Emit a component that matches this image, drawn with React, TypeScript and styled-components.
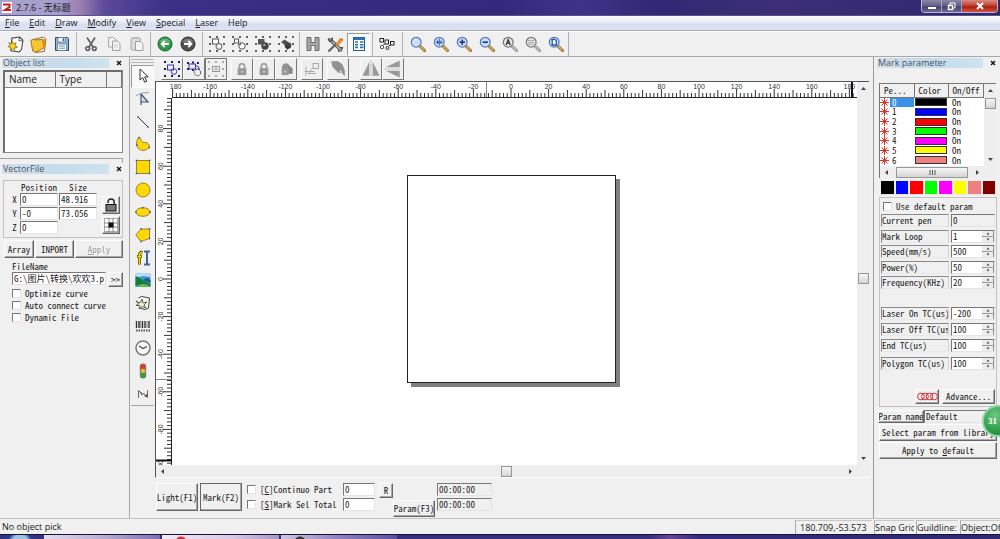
import React from "react";
import styled, { createGlobalStyle, css } from "styled-components";

const ui = `"Open Sans", "Noto Sans CJK SC", sans-serif`;
const mono = `"Noto Sans Mono CJK SC", "Liberation Mono", "Noto Sans CJK SC", monospace`;

const GlobalStyle = createGlobalStyle`
  * { box-sizing: border-box; }
  html, body, #root { height: 100%; }
  body { margin: 0; background: #f0f0f0; color: #1a1a1a; font: 9px/12px ${ui}; overflow: hidden; }
  button, input { font: inherit; color: inherit; margin: 0; padding: 0; }
  svg { display: block; flex: none; }
`;

const Window = styled.div`
  display: flex;
  flex-direction: column;
  height: 100%;
  overflow: hidden;
`;

/* ---------- title bar and menu ---------- */

const TitleBar = styled.header`
  flex: none;
  display: flex;
  align-items: center;
  height: 16px;
  padding-left: 2px;
  gap: 4px;
  border-bottom: 1px solid #56528a;
  background: linear-gradient(90deg, #a9a3cd 0, #a49dcb 60px, #9a7fb0 80px, #5b4a9a 105px, #3a2f84 170px, #33297a 50%, #3f3288 58%, #302873 66%, #3c2f78 78%, #2f2570 100%);
`;
const TitleText = styled.h1`
  margin: 0;
  font-size: 9px;
  font-weight: 400;
  line-height: 14px;
  flex: 1;
`;
const WindowButtons = styled.div`
  display: flex;
  align-self: flex-start;
  height: 13px;
  margin-right: 2px;
  border: 1px solid #b9b7d3;
  border-top: 0;
  border-radius: 0 0 4px 4px;
  overflow: hidden;
`;
const WindowButton = styled.button<{ $close?: boolean }>`
  display: flex;
  align-items: center;
  justify-content: center;
  width: ${(p) => (p.$close ? 35 : 20)}px;
  border: 0;
  border-right: ${(p) => (p.$close ? "0" : "1px solid #a5a2c4")};
  background: ${(p) => (p.$close ? "linear-gradient(#d98b80, #c0392b 50%, #a81f12 55%, #d2543c)" : "linear-gradient(#8a87a8, #605c85 50%, #464070 55%, #6b678f)")};
`;

const MenuBar = styled.nav`
  flex: none;
  display: flex;
  height: 15px;
  padding-left: 5px;
  gap: 10px;
  background: linear-gradient(#fbfcfe, #eef1f9 30%, #d9dff1 60%, #dde3f4);
  border-bottom: 1px solid #a9abb5;
`;
const MenuItem = styled.a`
  color: #1a1a1a;
  text-decoration: none;
  line-height: 14px;
  font-size: 9px;
`;

/* ---------- toolbars ---------- */

const Toolbar = styled.div`
  flex: none;
  display: flex;
  align-items: center;
  height: 26px;
  padding-left: 4px;
  border-bottom: 1px solid #a9a9ad;
  border-top: 1px solid #fff;
`;
const Separator = styled.span<{ $w: number }>`
  width: ${(p) => p.$w}px;
  height: 24px;
  display: flex;
  justify-content: center;
  &::before { content: ""; width: 1px; background: #b4b4b4; }
`;
const ToolButton = styled.button<{ $on?: boolean }>`
  display: flex;
  align-items: center;
  justify-content: center;
  width: 23px;
  height: 23px;
  border: 1px solid transparent;
  background: transparent;
  ${(p) => p.$on && css`background: #fafafa; border-color: #9a9a9a #fff #fff #9a9a9a;`}
`;

const Main = styled.div`
  flex: 1;
  min-height: 0;
  display: flex;
`;

/* ---------- docks ---------- */

const Dock = styled.aside<{ $w: number; $right?: boolean }>`
  flex: none;
  position: relative;
  width: ${(p) => p.$w}px;
  ${(p) => (p.$right ? "border-left: 1px solid #9d9d9d; padding: 1px 3px 0 3px;" : "border-right: 1px solid #a5a5a5; padding: 1px 6px 0 2px;")}
`;
const PanelTitle = styled.div`
  display: flex;
  align-items: center;
  gap: 6px;
`;
const PanelName = styled.h2`
  flex: 1;
  margin: 0;
  height: 10px;
  padding-left: 1px;
  font-size: 9px;
  line-height: 10px;
  font-weight: 400;
  color: #44586c;
  background: linear-gradient(90deg, #d5dfe9, #c5dbe9 50%, #cfe3ef);
`;
const CloseButton = styled.button`
  width: 8px;
  height: 8px;
  border: 0;
  background: none;
  display: flex;
  align-items: center;
  justify-content: center;
`;
const ObjectList = styled.div`
  height: 83px;
  margin: 2px 0 0 1px;
  border: 1px solid #8a8a8a;
  border-top: 2px solid #6e6e6e;
  border-left: 2px solid #6e6e6e;
  background: #fff;
`;
const ObjectTable = styled.table`
  width: 100%;
  table-layout: fixed;
  border-collapse: collapse;
  th {
    height: 15px;
    padding: 0 0 0 4px;
    text-align: left;
    font-weight: 400;
    font-size: 10px;
    line-height: 14px;
    background: #f0f0f0;
    border-right: 1px solid #777;
    border-bottom: 1px solid #888;
  }
`;
const DockDivider = styled.div`
  height: 5px;
  margin: 5px 0 1px -2px;
  border-top: 1px solid #a0a0a0;
  border-right: 1px solid #a0a0a0;
`;

/* ---------- form parts ---------- */

const Form = styled.form`
  font-family: ${mono};
  font-size: 9px;
  line-height: 11px;
`;
const GroupBox = styled.fieldset`
  margin: 0;
  padding: 0;
  min-width: 0;
  border: 1px solid #c2c2c2;
`;
const sunken = css`
  border: 1px solid;
  border-color: #777 #e4e4e4 #e4e4e4 #777;
`;
const TextField = styled.input<{ $h?: number; $plain?: boolean }>`
  ${sunken}
  width: 100%;
  min-width: 0;
  height: ${(p) => p.$h ?? 13}px;
  padding-left: 1px;
  background: ${(p) => (p.$plain ? "#f0f0f0" : "#fff")};
  font-family: ${mono};
  font-size: 9px;
  line-height: 11px;
  border-radius: 0;
  outline: 0;
`;
const PushButton = styled.button<{ $w?: number; $h: number; $strong?: boolean }>`
  ${(p) => (p.$w ? `width: ${p.$w}px;` : "width: 100%;")}
  height: ${(p) => p.$h}px;
  display: flex;
  align-items: center;
  justify-content: center;
  flex: none;
  white-space: nowrap;
  overflow: hidden;
  border: 1px solid;
  border-color: ${(p) => (p.$strong ? "#666" : "#fff #666 #666 #fff")};
  box-shadow: inset -1px -1px 0 #a8a8a8;
  background: #f0f0f0;
  font-family: ${mono};
  font-size: 9px;
  line-height: 11px;
  &:disabled { color: #9c9c9c; text-shadow: 1px 1px 0 #fff; }
`;
const CheckLine = styled.label`
  display: flex;
  align-items: center;
  gap: 4px;
  height: 11px;
  white-space: nowrap;
`;
const CheckBox = styled.input.attrs({ type: "checkbox" })`
  appearance: none;
  ${sunken}
  flex: none;
  width: 9px;
  height: 9px;
  background: #fff;
  border-radius: 0;
`;

/* vector file */
const PositionGroup = styled(GroupBox)`
  margin: 6px 0 0 1px;
  padding: 1px 2px 3px 6px;
  display: flex;
  justify-content: space-between;
`;
const AxisGrid = styled.div`
  display: grid;
  grid-template-columns: 9px 38px 38px;
  grid-template-rows: 10px;
  column-gap: 1px;
  row-gap: 1px;
  align-items: center;
  grid-auto-rows: 13px;
  > span { text-align: center; }
`;
const SideButtons = styled.div`
  display: flex;
  flex-direction: column;
  gap: 2px;
  padding-top: 14px;
`;
const ButtonRow = styled.div`
  display: flex;
  gap: 1px;
  margin: 2px 0 0 2px;
`;
const FileBlock = styled.div`
  display: flex;
  flex-direction: column;
  padding-left: 10px;
  margin-top: 3px;
`;
const FileRow = styled.div`
  display: flex;
  gap: 2px;
  margin-bottom: 1px;
`;
const Checks = styled.div`
  display: flex;
  flex-direction: column;
  gap: 1px;
`;

/* drawing tools */
const ToolColumn = styled.div`
  flex: none;
  width: 25px;
  padding: 2px 1px 0;
`;
const Grip = styled.div`
  height: 4px;
  margin-bottom: 2px;
  border: 1px solid #b5b5b5;
  border-left: 0;
  border-right: 0;
`;
const ToolList = styled.div`
  display: grid;
  grid-auto-rows: 1fr;
  height: 341px;
  border-bottom: 1px solid #a5a5a5;
`;
const DrawTool = styled.button<{ $on?: boolean }>`
  display: flex;
  align-items: center;
  justify-content: center;
  border: 1px solid transparent;
  background: transparent;
  ${(p) => p.$on && css`background: #f8f8f8; border-color: #9a9a9a #fff #fff #9a9a9a;`}
`;

/* ---------- centre ---------- */

const Center = styled.main`
  flex: 1;
  min-width: 0;
  display: flex;
  flex-direction: column;
`;
const EditBar = styled.div`
  flex: none;
  display: flex;
  align-items: center;
  gap: 4px;
  height: 24px;
  padding-left: 6px;
`;
const EditGroup = styled.div`
  display: flex;
  &:last-child { margin-left: 7px; }
`;
const EditButton = styled.button<{ $on?: boolean }>`
  width: 22px;
  height: 22px;
  display: flex;
  align-items: center;
  justify-content: center;
  background: #efefef;
  border: 1px solid;
  border-color: ${(p) => (p.$on ? "#777" : "#fbfbfb #777 #777 #fbfbfb")};
`;
const Workspace = styled.div`
  flex: 1;
  min-height: 0;
  display: grid;
  grid-template-columns: 17px minmax(0, 1fr) 12px;
  grid-template-rows: 16px minmax(0, 1fr) 12px;
  margin-right: 4px;
  border-top: 1px solid #555;
  border-left: 1px solid #555;
  border-bottom: 1px solid #fff;
  background: #fff;
`;
const TopRuler = styled.svg`
  grid-column: 1 / 3;
  width: 100%;
  height: 16px;
  overflow: hidden;
`;
const SideRuler = styled.svg`
  width: 17px;
  height: 100%;
  overflow: hidden;
`;
const Canvas = styled.div`
  position: relative;
  overflow: hidden;
  background: #fff;
`;
const Sheet = styled.div`
  position: absolute;
  left: 234px;
  top: 77px;
  width: 209px;
  height: 208px;
  background: #fff;
  border: 1px solid #222;
  box-shadow: 4px 4px 0 #808080;
`;
const ScrollTrack = styled.div<{ $vertical?: boolean; $end?: number }>`
  display: flex;
  flex-direction: ${(p) => (p.$vertical ? "column" : "row")};
  align-items: center;
  justify-content: space-between;
  padding: ${(p) => (p.$vertical ? "3px 0" : `0 ${p.$end ?? 3}px 0 3px`)};
  background: #eeeeee;
`;
const BottomTrack = styled(ScrollTrack)`
  grid-column: 1 / -1;
`;
const ScrollThumb = styled.div<{ $w?: number; $h?: number }>`
  width: ${(p) => p.$w ?? 11}px;
  height: ${(p) => p.$h ?? 11}px;
  display: flex;
  align-items: center;
  justify-content: center;
  border: 1px solid #979797;
  background: linear-gradient(#f6f6f6, #d4d4d4);
`;
const ScrollHead = styled.div`
  display: flex;
  flex-direction: column;
  align-items: center;
  gap: 4px;
`;

const MarkBar = styled.form`
  flex: none;
  display: flex;
  height: 40px;
  padding: 5px 0 0 1px;
  font-family: ${mono};
  font-size: 9px;
  line-height: 11px;
  align-items: flex-start;
`;
const MarkButtons = styled.div`
  display: flex;
  gap: 2px;
  margin-right: 5px;
`;
const Stack = styled.div<{ $w?: number }>`
  display: flex;
  flex-direction: column;
  gap: 2px;
  ${(p) => p.$w && `width: ${p.$w}px;`}
  > label { height: 13px; white-space: nowrap; display: flex; align-items: center; }
`;
const ResetSlot = styled.div`
  margin-left: 4px;
`;
const ParamSlot = styled.div`
  align-self: flex-end;
  margin-bottom: 1px;
  margin-right: 2px;
`;

/* ---------- mark parameters ---------- */

const PenBox = styled.div`
  display: grid;
  grid-template-columns: minmax(0, 1fr) 12px;
  grid-template-rows: 82px 12px;
  margin: 15px 1px 0 2px;
  border-top: 1px solid #777;
  border-left: 1px solid #777;
  background: #fff;
  overflow: hidden;
`;
const PenTable = styled.table`
  width: 100%;
  height: 81px;
  table-layout: fixed;
  border-collapse: collapse;
  font-family: ${mono};
  font-size: 9px;
  line-height: 9px;
  th {
    height: 13px;
    padding: 0 0 0 4px;
    text-align: left;
    font-weight: 400;
    background: #f0f0f0;
    border-right: 1px solid #777;
    border-bottom: 1px solid #777;
  }
  td { padding: 0; }
  td:last-child { padding-left: 4px; }
`;
const PenName = styled.div<{ $on?: boolean }>`
  display: flex;
  align-items: center;
  gap: 1px;
  height: 9px;
  > span { flex: 1; padding-left: 2px; ${(p) => p.$on && "background: #3a93e8; color: #fff;"} }
`;
const PenColor = styled.div<{ $c: string }>`
  height: 8px;
  margin: 0 1px;
  border: 1px solid #333;
  background: ${(p) => p.$c};
`;
const Swatches = styled.div`
  display: grid;
  grid-template-columns: repeat(8, 1fr);
  gap: 1px;
  margin: 3px 1px 0 4px;
`;
const Swatch = styled.button<{ $c: string }>`
  height: 14px;
  border: 1px solid #e6e6e6;
  border-width: 0 1px 1px 0;
  background: ${(p) => p.$c};
`;
const ParamGroup = styled(GroupBox)`
  height: 210px;
  margin: 2px 0 0 2px;
  padding: 3px 1px 2px;
  display: flex;
  flex-direction: column;
`;
const DefaultLine = styled(CheckLine)`
  padding-left: 2px;
`;
const ParamRow = styled.div<{ $mt?: number }>`
  display: grid;
  grid-template-columns: 68px minmax(0, 1fr);
  gap: 2px;
  height: 13px;
  margin-top: ${(p) => p.$mt ?? 2}px;
`;
const ParamLabel = styled.label`
  ${sunken}
  border-color: #8a8a8a #d4d4d4 #e8e8e8 #8a8a8a;
  white-space: nowrap;
  overflow: hidden;
`;
const Spin = styled.div`
  ${sunken}
  display: flex;
  background: #fff;
  input { border: 0; height: 11px; }
`;
const SpinArrows = styled.span`
  flex: none;
  width: 12px;
  display: flex;
  background: #ececec;
`;
const AdvancedRow = styled.div`
  display: flex;
  justify-content: flex-end;
  gap: 3px;
  margin-top: auto;
`;
const NameRow = styled.div`
  display: grid;
  grid-template-columns: 46px minmax(0, 1fr);
  margin: 3px 0 1px 1px;
  height: 13px;
`;
const LibraryButtons = styled.div`
  display: flex;
  flex-direction: column;
  gap: 1px;
  margin-left: 2px;
`;
const Badge = styled.div`
  position: absolute;
  right: -14px;
  top: 348px;
  width: 32px;
  height: 32px;
  border-radius: 50%;
  border: 2px solid #8fd3a0;
  background: radial-gradient(circle at 40% 30%, #6cc982, #2c9b48 60%, #1f7f38);
  color: #fff;
  font: 700 9px/28px "Liberation Serif", serif;
  padding-left: 4px;
`;

/* ---------- status and task bars ---------- */

const StatusBar = styled.footer`
  flex: none;
  display: flex;
  height: 16px;
  border-top: 1px solid #c4c4c4;
  padding: 1px 0 0 2px;
  gap: 2px;
  line-height: 14px;
`;
const StatusText = styled.span`
  flex: 1;
`;
const StatusCell = styled.span<{ $w: number; $pad?: number }>`
  width: ${(p) => p.$w}px;
  padding-left: ${(p) => p.$pad ?? 0}px;
  overflow: hidden;
  white-space: nowrap;
  border-left: 1px solid #a8a8a8;
  border-top: 1px solid #c8c8c8;
  line-height: 13px;
`;
const TaskBar = styled.div`
  flex: none;
  display: flex;
  gap: 2px;
  height: 5px;
  overflow: hidden;
  border-top: 1px solid #17123c;
  background: linear-gradient(90deg, #37307e 0, #37307e 65%, #6b4296 67%, #332b7c 70%, #2f2972);
`;
const TaskItem = styled.div<{ $bg: string; $w: number }>`
  width: ${(p) => p.$w}px;
  height: 6px;
  padding-left: 10px;
  background: ${(p) => p.$bg};
`;

/* ---------- icons ---------- */

const Svg = ({ children, s = 16, vb = 16 }: { children: React.ReactNode; s?: number; vb?: number }) => (
  <svg width={s} height={s} viewBox={`0 0 ${vb} ${vb}`} fill="none" aria-hidden="true">{children}</svg>
);

const dots = (color = "#111", w = 1.6) =>
  [1, 8, 15].flatMap((x) => [1, 8, 15].map((y) => (x === 8 && y === 8 ? null : (
    <rect key={`${x}-${y}`} x={x - w / 2} y={y - w / 2} width={w} height={w} fill={color} />
  ))));

const Magnifier = ({ gray, children }: { gray?: boolean; children?: React.ReactNode }) => (
  <Svg>
    <path d="M9.5 9.5 14.5 14.5" stroke={gray ? "#888" : "#8a6a2c"} strokeWidth="3" strokeLinecap="round" />
    <path d="M9.8 9.6 14.3 14.2" stroke={gray ? "#c9c9c9" : "#e0b25c"} strokeWidth="1.4" strokeLinecap="round" />
    <circle cx="6.2" cy="6.2" r="4.9" fill={gray ? "#e4e4e4" : "#cfdff8"} stroke={gray ? "#777" : "#5577b8"} strokeWidth="1.2" />
    {children}
  </Svg>
);

const Scissors = () => (
  <Svg>
    <path d="M4 1.5 10 11M12 1.5 6 11" stroke="#666" strokeWidth="1.8" />
    <circle cx="4.7" cy="12.6" r="1.9" stroke="#555" strokeWidth="1.5" />
    <circle cx="11.3" cy="12.6" r="1.9" stroke="#555" strokeWidth="1.5" />
  </Svg>
);
const NewFile = () => (
  <Svg s={17}>
    <path d="M4.5 2 12 1l3 3-1.3 8.5L11.5 15 4 14Z" fill="#fff" stroke="#444" />
    <path d="m11.8 1.2-.6 3.2 3.6.2" stroke="#444" strokeWidth=".8" />
    <path d="m5 5 1 2.4 2.6-1L7.5 8.9 10 10.5l-2.7.3.2 2.7L5.4 11.7 3.2 13.5l.1-2.8L.8 10l2.3-1.3L1.6 6.3l2.5 1Z" fill="#ffd51c" stroke="#6b5300" strokeWidth=".6" />
  </Svg>
);
const OpenFile = () => (
  <Svg s={17}>
    <path d="M3 3.5 12 1l3 2-1.5 11.5L5 15.5Z" fill="#fffbe6" stroke="#77561a" strokeWidth=".8" />
    <path d="M.8 4.2 3.5 2.7l1 1 7.5-.4 1 8L5.3 15.3 2.500 14Z" fill="#f9c62f" stroke="#8a6412" strokeWidth=".8" />
    <path d="m12.5 3.5 2.5-.8-1.3 9-1.7 1Z" fill="#e08a14" />
  </Svg>
);
const SaveFile = () => (
  <Svg>
    <path d="M1.5 1.5h12l1 1v12h-13Z" fill="#8fb6d8" stroke="#2f4a66" />
    <rect x="4" y="1.5" width="7.5" height="4.5" fill="#f4f7fa" stroke="#50667c" strokeWidth=".6" />
    <rect x="8.8" y="2.3" width="1.5" height="2.8" fill="#334b63" />
    <rect x="3.5" y="8" width="9" height="6.5" fill="#fff" stroke="#50667c" strokeWidth=".6" />
    <path d="M5 10h6M5 12.2h6" stroke="#5d8db8" />
  </Svg>
);
const CopyIcon = () => (
  <Svg>
    <path d="M2.5 1.5h5L10 4v7H2.5Z" fill="#f3f3f3" stroke="#aaa" />
    <path d="M6.5 5h5L14 7.5v7H6.5Z" fill="#f3f3f3" stroke="#a0a0a0" />
    <path d="M8 9h4M8 11h4" stroke="#ccc" />
  </Svg>
);
const PasteIcon = () => (
  <Svg>
    <rect x="2" y="2" width="9.5" height="12" rx="1" fill="#ddd" stroke="#aaa" />
    <rect x="4.5" y="1" width="4.5" height="2" fill="#bbb" />
    <path d="M6.5 5.5h5L14 8v6.5H6.5Z" fill="#f6f6f6" stroke="#a0a0a0" />
  </Svg>
);
const ArrowDisc = ({ green }: { green?: boolean }) => (
  <Svg>
    <circle cx="8" cy="8" r="7" fill={green ? "#2c9a45" : "#505050"} stroke={green ? "#156628" : "#2c2c2c"} />
    <path d="M2.5 6a6 6 0 0 1 11 0Q8 8 2.5 6Z" fill="#fff" opacity=".25" />
    {green ? <path d="M12 8H5M7.8 4.8 4.6 8l3.2 3.2" stroke="#fff" strokeWidth="1.9" /> : <path d="M4 8h7M8.2 4.8 11.4 8l-3.2 3.2" stroke="#fff" strokeWidth="1.9" />}
  </Svg>
);
const GroupIcon = ({ kind }: { kind: number }) => (
  <Svg>
    {dots()}
    {kind === 0 && <g stroke="#555"><rect x="3.5" y="3" width="6" height="5" fill="#fff" /><circle cx="10" cy="10.5" r="3" fill="#eee" /></g>}
    {kind === 1 && <g stroke="#555"><rect x="2.5" y="3" width="4" height="4" fill="#fff" /><circle cx="10" cy="10" r="3.2" fill="#fff" /><path d="M6 8.5h3M8 5.5v3" strokeDasharray="1 1" /></g>}
    {kind === 2 && <g fill="#555"><rect x="3" y="3" width="6.5" height="5.5" /><circle cx="10" cy="10" r="3.7" fill="#444" /><circle cx="9.3" cy="9" r="1.2" fill="#aaa" /></g>}
    {kind === 3 && <g fill="#555"><path d="m6.5 3.5 4 2.5-4 3L3 6Z" /><circle cx="10" cy="9.5" r="3.3" fill="#444" /><path d="M7 10h5l-2.5 4Z" fill="#333" /></g>}
  </Svg>
);
const HatchIcon = () => (
  <Svg>
    <path d="M2 1.5h4v5h4v-5h4v13h-4v-5H6v5H2Z" fill="#b5b5b5" stroke="#666" />
    <path d="M2 4h4M2 7h12M2 9.5h12M2 12h4M10 4h4M10 12h4" stroke="#777" strokeWidth=".7" />
  </Svg>
);
const ToolsIcon = () => (
  <Svg s={17}>
    <path d="M3 3.5 13 13" stroke="#444" strokeWidth="3.2" strokeLinecap="round" />
    <path d="M3 3.5 13 13" stroke="#bbb" strokeWidth="1.6" strokeLinecap="round" />
    <path d="M1 2.5 2.5 5 5 4.5 5 1.5" stroke="#444" strokeWidth="1.2" />
    <path d="m11 12.5.3 2.5M12.5 11l2.7.2" stroke="#555" strokeWidth="1.5" />
    <path d="m2 14 6-6" stroke="#666" strokeWidth="2" strokeLinecap="round" />
    <path d="m8 8 4.5-5.5 2 .2.2 1.5L9.5 9.5Z" fill="#f39a2c" stroke="#b3600c" strokeWidth=".7" />
  </Svg>
);
const ListIcon = () => (
  <Svg>
    <rect x="2.5" y="1.5" width="11" height="13" fill="#fff" stroke="#1b5a93" />
    <rect x="2.5" y="1.5" width="11" height="2.5" fill="#2773b5" />
    {[6, 8.7, 11.4].map((y) => <path key={y} d={`M4 ${y}h3M9 ${y}h3.5`} stroke="#2773b5" strokeWidth="1.6" />)}
  </Svg>
);
const NodesIcon = () => (
  <Svg>
    <g fill="#fff" stroke="#222"><rect x="1" y="2.5" width="3.5" height="3.5" /><rect x="6" y="4" width="3.5" height="4" /><rect x="11.5" y="5.5" width="3.5" height="3.5" /><rect x="1.5" y="9.5" width="3" height="3" rx="1" /><rect x="7" y="10.5" width="3" height="3" rx="1.5" /></g>
    <path d="M4.5 8.5h1M10 9.5h1.5" stroke="#222" />
  </Svg>
);
const PadLock = ({ stack }: { stack?: boolean }) => (
  <Svg s={14}>
    {stack && <path d="M4 9V6q0-4 4-4 3 0 4 3l3 2v6h-4" fill="#888" stroke="#888" />}
    <rect x="3" y="7" width={stack ? 8 : 10} height="8" fill="#999" />
    <path d={stack ? "M4.5 8V6q0-2.5 2.5-2.5T9.5 6v2" : "M5 8V5q0-3 3-3t3 3v3"} stroke="#999" strokeWidth="1.8" />
    <path d={stack ? "M7 10v2" : "M8 10v2"} stroke="#e8e8e8" strokeWidth="1.3" />
  </Svg>
);

type Entry = { label: string; icon: React.ReactNode; on?: boolean };

const mainTools: { sep: number; items: Entry[] }[] = [
  { sep: 6, items: [{ label: "New", icon: <NewFile /> }, { label: "Open", icon: <OpenFile /> }, { label: "Save", icon: <SaveFile /> }] },
  { sep: 5, items: [{ label: "Cut", icon: <Scissors /> }, { label: "Copy", icon: <CopyIcon /> }, { label: "Paste", icon: <PasteIcon /> }] },
  { sep: 6, items: [{ label: "Undo", icon: <ArrowDisc green /> }, { label: "Redo", icon: <ArrowDisc /> }] },
  { sep: 4, items: ["Combine", "Uncombine", "Group", "Ungroup"].map((label, i) => ({ label, icon: <GroupIcon kind={i} /> })) },
  { sep: 5, items: [{ label: "Hatch", icon: <HatchIcon /> }, { label: "Options", icon: <ToolsIcon /> }, { label: "Object list", icon: <ListIcon />, on: true }] },
  { sep: 8, items: [{ label: "Nodes", icon: <NodesIcon /> }] },
  {
    sep: 3,
    items: [
      { label: "Zoom window", icon: <Magnifier /> },
      { label: "Pan", icon: <Magnifier><path d="M6.2 2.8v6.8M2.8 6.2h6.8M4.5 4.5v3.4M8 4.5v3.4" stroke="#27549e" /></Magnifier> },
      { label: "Zoom in", icon: <Magnifier><path d="M6.2 3.5v5.4M3.5 6.2h5.4" stroke="#1c3f8c" strokeWidth="1.7" /></Magnifier> },
      { label: "Zoom out", icon: <Magnifier><path d="M3.5 6.2h5.4" stroke="#1c3f8c" strokeWidth="1.7" /></Magnifier> },
      { label: "Zoom all", icon: <Magnifier gray><path d="M4.2 9 6.2 3.5 8.2 9M5 7.2h2.5" stroke="#333" strokeWidth="1.2" /></Magnifier> },
      { label: "Zoom selection", icon: <Magnifier gray><path d="M3.5 4.5h5.5M3.5 6.5h5.5M3.5 8.3h5.5" stroke="#777" strokeDasharray="1 1" /></Magnifier> },
      { label: "Zoom page", icon: <Magnifier><path d="M4.2 3.4h2.6L8.4 5v4H4.2Z" fill="#fff" stroke="#1d55b3" strokeWidth="1.3" /></Magnifier> },
    ],
  },
];

const handle = "#3d6a94";
const corner = (pts: number[][]) => pts.map(([x, y]) => <rect key={`${x},${y}`} x={x - 0.8} y={y - 0.8} width="1.6" height="1.6" fill={handle} />);
const gold = { fill: "#ffd800", stroke: "#8d7a2a", strokeWidth: 0.9 };

const drawTools: Entry[] = [
  { label: "Select", on: true, icon: <Svg><path d="M5 1v11l2.7-2.4 2 4.6 2-.9-2-4.4h3.5Z" fill="#fff" stroke="#333" /></Svg> },
  { label: "Node edit", icon: <Svg><path d="M1 4.5Q7 1 14 1.5" stroke="#8ca0b8" /><path d="M6 3v11M6 3l7 8H6" stroke="#46566e" fill="#d8e0ea" strokeWidth="1.2" /></Svg> },
  { label: "Line", icon: <Svg><path d="M3 3l10 10" stroke="#333" />{corner([[3, 3], [13, 13]])}</Svg> },
  { label: "Curve", icon: <Svg><path d="M3 2Q6 .5 6 4.5 7 7 10 6.500q4 0 4.500 4.500-2 3.500-6.500 3.500-6-1-6.500-6Q1.500 4.500 3 2Z" {...gold} />{corner([[4, 1.5], [14.3, 11.5], [2, 9]])}</Svg> },
  { label: "Rectangle", icon: <Svg><rect x="1.5" y="1.5" width="13" height="13" {...gold} />{corner([[1.5, 1.5], [14.5, 1.5], [1.5, 14.5], [14.5, 14.5]])}</Svg> },
  { label: "Circle", icon: <Svg><circle cx="8" cy="8" r="7" {...gold} /></Svg> },
  { label: "Ellipse", icon: <Svg><ellipse cx="8" cy="8" rx="7.2" ry="4.3" {...gold} />{corner([[8, 3.7], [1, 8], [15, 8]])}</Svg> },
  { label: "Polygon", icon: <Svg><path d="M6 2h8.5v9.5L6 14.5.8 8Z" {...gold} />{corner([[6, 2], [14.5, 2], [14.5, 11.5], [6, 14.5]])}</Svg> },
  { label: "Text", icon: <Svg><path d="M7.5 2.5Q4.5 1.5 4.5 5v9.5M2 6.5h5" stroke="#5b4a00" strokeWidth="3" /><path d="M7.5 2.7Q4.5 1.8 4.5 5v9M2.5 6.5h4" stroke="#ffd800" strokeWidth="1.5" /><path d="M9 1.5h6M9 14.5h6M12 1.5v13" stroke="#3c6a98" strokeWidth="2" /></Svg> },
  { label: "Bitmap", icon: <Svg><rect x=".5" y="1.5" width="15" height="13" fill="#3f97d8" /><path d="M.5 1.5h15V5L8 4 .5 6Z" fill="#b9e2fa" /><path d="M.5 4.5Q4 4 7 8l8.5 4v2.5H.5Z" fill="#12803d" /><path d="M.5 14.5Q8 9.5 15.5 14.5Z" fill="#6cc04a" /><path d="m8 8 4-2.5L15.500 8v3Z" fill="#215c8e" /></Svg> },
  { label: "Vector file", icon: <Svg><path d="m3.5 3 3-1.5 8 1.5-1 10-3 1.5-7-1.5" stroke="#444" fill="#f7f7f2" /><path d="m1 6 4 2 2-4 1 4 4-1-3 3 2 3-4-1.5L5 14l-.5-3.5L1 10.5 3.5 9Z" fill="#e6ecd8" stroke="#4b5a3c" strokeWidth=".9" /></Svg> },
  { label: "Barcode", icon: <Svg><path d="M1.5 3v7M4 3v7M7.5 3v7M10 3v7M14 3v7" stroke="#333" strokeWidth="1.4" /><path d="M5.7 3v7M12 3v7" stroke="#666" strokeWidth=".8" /><path d="M1 12.5h14" stroke="#555" strokeWidth="2" strokeDasharray="1.5 1" /></Svg> },
  { label: "Delay", icon: <Svg><circle cx="8" cy="8" r="7" fill="#f7f7f7" stroke="#777" strokeWidth="1.5" /><path d="M4 6 8 8.500l4-2" stroke="#444" strokeWidth="1.2" /></Svg> },
  { label: "Input port", icon: <Svg><rect x="4.8" y=".5" width="6.4" height="15" rx="3.2" fill="#777" /><circle cx="8" cy="3.8" r="2.5" fill="#e03a26" /><circle cx="8" cy="8" r="2.3" fill="#f2b632" /><circle cx="8" cy="12.2" r="2.5" fill="#2fa33c" /></Svg> },
  { label: "Encoder", icon: <Svg s={12}><path d="M2 3v10M14 3v10" stroke="#666" strokeWidth="1.4" /><path d="m3 4 4 5 2-2 4 5M10 11h3V8M6 6v3" stroke="#444" strokeWidth="1.3" /></Svg> },
];

const purple = "#3b35b5";
const editGroups: Entry[][] = [
  [
    { label: "Pick all", icon: <Svg>{dots("#1c1c5c", 2)}<rect x="3.5" y="4" width="6" height="5" stroke={purple} /><circle cx="10" cy="10.5" r="2.8" stroke={purple} /></Svg> },
    { label: "Pick inverse", icon: <Svg>{[[2, 2], [7, 1.5], [12, 2], [2, 8], [7, 9]].map(([x, y]) => <rect key={`${x}${y}`} x={x - 1} y={y - 1} width="2" height="2" fill="#1c1c5c" />)}<rect x="3" y="3" width="6.5" height="5" stroke={purple} /><path d="M9.5 4.5q4 .5 4 4M13.5 8.5l-2-1" stroke={purple} /><circle cx="11.5" cy="11.5" r="3.2" stroke="#333" strokeDasharray="2 1" /></Svg> },
    { label: "Put to origin", on: true, icon: <Svg>{dots("#999", 1.8)}<rect x="4.5" y="5.5" width="7" height="5" stroke="#999" /><path d="M8 6v4M6 8h4" stroke="#aaa" /></Svg> },
  ],
  [{ label: "Lock", icon: <PadLock /> }, { label: "Unlock", icon: <PadLock /> }, { label: "Unlock all", icon: <PadLock stack /> }],
  [{ label: "Array", icon: <Svg><path d="M2 5.5v9M.5 10.5h10M4 12.5h8" stroke="#aaa" /><path d="M4.5 12 9 6.5" stroke="#aaa" /><rect x="9" y="2.5" width="5.5" height="5" stroke="#aaa" fill="#eee" /></Svg> }],
  [{ label: "Shear", icon: <Svg s={18}><path d="M2 1h6l4 3 2 5v6l-3-3-3-1-5-5Z" fill="#909090" /><path d="m10 9 1 3 3 3" stroke="#eee" /></Svg> }],
  [
    { label: "Mirror horizontally", icon: <Svg s={18}><path d="M6.5 1.5V14H.5ZM9.5 1.5V14h6Z" fill="#999" /><path d="M8 .5v15" stroke="#bbb" strokeDasharray="2 1" /></Svg> },
    { label: "Mirror vertically", icon: <Svg s={18}><path d="M14 .5v6L1.5 6.5ZM14 15.5v-6L1.5 9.5Z" fill="#999" /><path d="M.5 8h15" stroke="#bbb" strokeDasharray="2 1" /></Svg> },
  ],
];

const Triangle = ({ dir }: { dir: "up" | "down" | "left" | "right" }) => {
  const d = { up: "M1 5 3.5 2 6 5Z", down: "M1 2 3.5 5 6 2Z", left: "M5 1 2 3.5 5 6Z", right: "M2 1 5 3.5 2 6Z" }[dir];
  return <svg width="7" height="7" viewBox="0 0 7 7" aria-hidden="true"><path d={d} fill="#444" /></svg>;
};
const Cross = () => (
  <svg width="6" height="6" viewBox="0 0 6 6" aria-hidden="true"><path d="m1 1 4 4M5 1 1 5" stroke="#111" strokeWidth="1.4" /></svg>
);

/* ---------- rulers ---------- */

const STEP = 3.76;
const tickLength = (i: number) => (i % 10 === 0 ? 8 : i % 5 === 0 ? 7 : 4);
const range = (from: number, to: number) => Array.from({ length: to - from + 1 }, (_, k) => from + k);

const HorizontalRuler = ({ zero }: { zero: number }) => (
  <TopRuler>
    <path d="M16 15.5H3000" stroke="#222" />
    {range(-90, 91).map((i) => {
      const x = zero + i * STEP;
      return (
        <g key={i}>
          <path d={`M${x} 15v${-tickLength(i)}`} stroke="#333" strokeWidth="1" />
          {i % 10 === 0 && <text x={i === -90 ? x + 3 : x} y="7" textAnchor="middle" fontSize="7" fontFamily="Liberation Sans, sans-serif" fill="#333">{i === -90 ? 180 : i * 2}</text>}
        </g>
      );
    })}
    <path d="M330.5 0v15" stroke="#888" />
    <path d="M696 0v15" stroke="#111" strokeWidth="2" />
  </TopRuler>
);

const VerticalRuler = ({ zero }: { zero: number }) => (
  <SideRuler>
    <path d="M15.5 0V3000" stroke="#222" />
    {range(-48, 50).map((i) => {
      const y = zero + i * STEP;
      return (
        <g key={i}>
          <path d={`M15 ${y}h${-tickLength(i)}`} stroke="#333" strokeWidth="1" />
          {i % 10 === 0 && <text transform={`translate(7 ${y}) rotate(-90)`} textAnchor="middle" fontSize="7" fontFamily="Liberation Sans, sans-serif" fill="#333">{-i * 2}</text>}
        </g>
      );
    })}
    <path d="M0 281.5h16" stroke="#888" />
    <path d="M0 362.5h16" stroke="#111" strokeWidth="2" />
  </SideRuler>
);

/* ---------- data ---------- */

const menus = [["F", "ile"], ["E", "dit"], ["D", "raw"], ["M", "odify"], ["V", "iew"], ["S", "pecial"], ["L", "aser"], ["", "Help"]];
const pens = ["#000", "#00f", "#f00", "#0f0", "#f0f", "#ff0", "#f08080"];
const swatches = [...pens, "#800000"];
const params: { label: string; value: string; mt?: number; fixed?: boolean }[] = [
  { label: "Current pen", value: "0", fixed: true },
  { label: "Mark Loop", value: "1", mt: 3 },
  { label: "Speed(mm/s)", value: "500" },
  { label: "Power(%)", value: "50", mt: 3 },
  { label: "Frequency(KHz)", value: "20" },
  { label: "Laser On TC(us)", value: "-200", mt: 18 },
  { label: "Laser Off TC(us", value: "100", mt: 3 },
  { label: "End TC(us)", value: "100", mt: 3 },
  { label: "Polygon TC(us)", value: "100", mt: 5 },
];

const DockTitle = ({ children }: { children: string }) => (
  <PanelTitle>
    <PanelName>{children}</PanelName>
    <CloseButton aria-label={`Close ${children}`}><Cross /></CloseButton>
  </PanelTitle>
);

const LeftDock = () => (
  <Dock $w={130}>
    <DockTitle>Object list</DockTitle>
    <ObjectList>
      <ObjectTable>
        <colgroup><col width="50" /><col width="51" /><col /></colgroup>
        <thead><tr><th>Name</th><th>Type</th><th aria-label="Extra" /></tr></thead>
      </ObjectTable>
    </ObjectList>
    <DockDivider />
    <DockTitle>VectorFile</DockTitle>
    <Form>
      <PositionGroup>
        <AxisGrid>
          <span /><span>Position</span><span>Size</span>
          <span>X</span><TextField aria-label="X position" defaultValue="0" /><TextField aria-label="X size" defaultValue="48.916" />
          <span>Y</span><TextField aria-label="Y position" defaultValue="-0" /><TextField aria-label="Y size" defaultValue="73.056" />
          <span>Z</span><TextField aria-label="Z position" defaultValue="0" />
        </AxisGrid>
        <SideButtons>
          <PushButton type="button" $w={18} $h={18} aria-label="Lock ratio">
            <svg width="14" height="14" viewBox="0 0 14 14" fill="none"><rect x="2" y="6.5" width="10" height="6.5" fill="#777" stroke="#111" /><path d="M4 5V4q0-3 3-3t3.2 3v3" stroke="#222" strokeWidth="1.5" /></svg>
          </PushButton>
          <PushButton type="button" $w={18} $h={18} aria-label="Anchor point">
            <svg width="14" height="14" viewBox="0 0 14 14" fill="none"><rect x=".5" y=".5" width="13" height="13" fill="#fff" stroke="#aaa" /><path d="M5 0v14M9 0v14M0 5h14M0 9h14" stroke="#888" /><rect x="4.5" y="4.5" width="5" height="5" fill="#111" /></svg>
          </PushButton>
        </SideButtons>
      </PositionGroup>
      <ButtonRow>
        <PushButton type="button" $w={30} $h={18}>Array</PushButton>
        <PushButton type="button" $w={39} $h={18}>INPORT</PushButton>
        <PushButton type="button" $w={48} $h={18} disabled><u>A</u>pply</PushButton>
      </ButtonRow>
      <FileBlock>
        <label htmlFor="file-name">FileName</label>
        <FileRow>
          <TextField id="file-name" defaultValue="G:\图片\转换\欢欢3.plt" />
          <PushButton type="button" $w={15} $h={15} aria-label="Browse">&gt;&gt;</PushButton>
        </FileRow>
        <Checks>
          <CheckLine><CheckBox />Optimize curve</CheckLine>
          <CheckLine><CheckBox />Auto connect curve</CheckLine>
          <CheckLine><CheckBox />Dynamic File</CheckLine>
        </Checks>
      </FileBlock>
    </Form>
  </Dock>
);

const CenterArea = () => (
  <Center>
    <EditBar>
      {editGroups.map((group, g) => (
        <EditGroup key={g}>
          {group.map((b) => <EditButton key={b.label} $on={b.on} aria-label={b.label}>{b.icon}</EditButton>)}
        </EditGroup>
      ))}
    </EditBar>
    <Workspace>
      <HorizontalRuler zero={355} />
      <ScrollTrack $vertical><Triangle dir="up" /></ScrollTrack>
      <VerticalRuler zero={181} />
      <Canvas><Sheet /></Canvas>
      <ScrollTrack $vertical><span /><ScrollThumb /><Triangle dir="down" /></ScrollTrack>
      <BottomTrack $end={15}><Triangle dir="left" /><ScrollThumb /><Triangle dir="right" /></BottomTrack>
    </Workspace>
    <MarkBar>
      <MarkButtons>
        <PushButton type="button" $w={42} $h={28}>Light(F1)</PushButton>
        <PushButton type="button" $w={42} $h={28} $strong>Mark(F2)</PushButton>
      </MarkButtons>
      <Stack $w={67}>
        <CheckLine><CheckBox /><span>[<u>C</u>]Continuo</span></CheckLine>
        <CheckLine><CheckBox /><span>[<u>S</u>]Mark Sel</span></CheckLine>
      </Stack>
      <Stack $w={29}>
        <label htmlFor="part">Part</label>
        <label htmlFor="total">Total</label>
      </Stack>
      <Stack $w={32}>
        <TextField id="part" defaultValue="0" />
        <TextField id="total" defaultValue="0" />
      </Stack>
      <ResetSlot><PushButton type="button" $w={14} $h={15}>R</PushButton></ResetSlot>
      <ParamSlot><PushButton type="button" $w={42} $h={17}>Param(F3)</PushButton></ParamSlot>
      <Stack $w={55}>
        <TextField aria-label="Part time" $plain readOnly value="00:00:00" />
        <TextField aria-label="Total time" $plain readOnly value="00:00:00" />
      </Stack>
    </MarkBar>
  </Center>
);

const RightDock = () => (
  <Dock $w={127} $right>
    <DockTitle>Mark parameter</DockTitle>
    <PenBox>
      <PenTable>
        <colgroup><col width="34" /><col width="34" /><col /></colgroup>
        <thead><tr><th>Pe...</th><th>Color</th><th>On/Off</th></tr></thead>
        <tbody>
          {pens.map((c, i) => (
            <tr key={c}>
              <td>
                <PenName $on={i === 0}>
                  <svg width="9" height="9" viewBox="0 0 9 9" aria-hidden="true"><path d="M4.5 0v9M0 4.5h9M1.5 1.5l6 6M7.5 1.5l-6 6" stroke="#e0332c" /></svg>
                  <span>{i}</span>
                </PenName>
              </td>
              <td><PenColor $c={c} /></td>
              <td>On</td>
            </tr>
          ))}
        </tbody>
      </PenTable>
      <ScrollTrack $vertical>
        <ScrollHead><Triangle dir="up" /><ScrollThumb /></ScrollHead>
        <Triangle dir="down" />
      </ScrollTrack>
      <BottomTrack $end={15}>
        <Triangle dir="left" />
        <ScrollThumb $w={72}>
          <svg width="7" height="5" viewBox="0 0 7 5" aria-hidden="true"><path d="M1 0v5M3.5 0v5M6 0v5" stroke="#555" /></svg>
        </ScrollThumb>
        <Triangle dir="right" />
      </BottomTrack>
    </PenBox>
    <Swatches>{swatches.map((c) => <Swatch key={c} $c={c} aria-label={`Pen colour ${c}`} />)}</Swatches>
    <Form>
      <ParamGroup>
        <DefaultLine><CheckBox />Use default param</DefaultLine>
        {params.map((p, i) => (
          <ParamRow key={p.label} $mt={p.mt}>
            <ParamLabel htmlFor={`param-${i}`}>{p.label}</ParamLabel>
            {p.fixed ? <TextField id={`param-${i}`} $plain readOnly value={p.value} /> : (
              <Spin>
                <TextField id={`param-${i}`} defaultValue={p.value} />
                <SpinArrows>
                  <svg width="12" height="11" viewBox="0 0 12 11" aria-hidden="true"><path d="M0 5.5h12M11.5 0v11" stroke="#999" /><path d="m4.5 3.5 1.5-2 1.5 2ZM4.5 7.5 6 9.5l1.5-2Z" fill="#444" /></svg>
                </SpinArrows>
              </Spin>
            )}
          </ParamRow>
        ))}
        <AdvancedRow>
          <PushButton type="button" $w={24} $h={15} aria-label="Wobble">
            <svg width="21" height="9" viewBox="0 0 21 9" fill="none">{[4, 8, 12.5, 17].map((x) => <circle key={x} cx={x} cy="4.5" r="3.4" stroke="#d2323c" />)}</svg>
          </PushButton>
          <PushButton type="button" $w={53} $h={15}>Advance...</PushButton>
        </AdvancedRow>
      </ParamGroup>
      <NameRow>
        <PushButton type="button" $h={13}>Param name</PushButton>
        <TextField aria-label="Param name" $plain defaultValue="Default" />
      </NameRow>
      <LibraryButtons>
        <PushButton type="button" $h={17}>Select param from library</PushButton>
        <PushButton type="button" $h={17}><span>Apply to <u>d</u>efault</span></PushButton>
      </LibraryButtons>
    </Form>
    <Badge>31</Badge>
  </Dock>
);

export default function App() {
  return (
    <Window>
      <GlobalStyle />
      <TitleBar>
        <svg width="10" height="11" viewBox="0 0 10 11" fill="none" aria-hidden="true"><rect width="10" height="11" fill="#fff" /><path d="M1 2.500h6.500v2.500L3 8h6" stroke="#c81e1e" strokeWidth="2" /></svg>
        <TitleText>2.7.6 - 无标题</TitleText>
        <WindowButtons>
          <WindowButton aria-label="Minimize"><svg width="8" height="8" viewBox="0 0 8 8"><path d="M0 5h8v2H0Z" fill="#fff" /></svg></WindowButton>
          <WindowButton aria-label="Restore"><svg width="9" height="9" viewBox="0 0 9 9" fill="none"><path d="M3 3V1h5v5H6" stroke="#fff" /><path d="M1.5 3.5h4v4h-4Z" stroke="#fff" strokeWidth="1.4" /></svg></WindowButton>
          <WindowButton $close aria-label="Close"><svg width="8" height="8" viewBox="0 0 8 8"><path d="m1 1 6 6M7 1 1 7" stroke="#fff" strokeWidth="2" /></svg></WindowButton>
        </WindowButtons>
      </TitleBar>
      <MenuBar>
        {menus.map(([key, rest]) => <MenuItem key={rest} href="#"><u>{key}</u>{rest}</MenuItem>)}
      </MenuBar>
      <Toolbar>
        {mainTools.map((group, g) => (
          <React.Fragment key={g}>
            {group.items.map((t) => <ToolButton key={t.label} $on={t.on} aria-label={t.label}>{t.icon}</ToolButton>)}
            <Separator $w={group.sep} />
          </React.Fragment>
        ))}
      </Toolbar>
      <Main>
        <LeftDock />
        <ToolColumn>
          <Grip />
          <ToolList>
            {drawTools.map((t) => <DrawTool key={t.label} $on={t.on} aria-label={t.label}>{t.icon}</DrawTool>)}
          </ToolList>
        </ToolColumn>
        <CenterArea />
        <RightDock />
      </Main>
      <StatusBar>
        <StatusText>No object pick</StatusText>
        <StatusCell $w={77} $pad={4}>180.709,-53.573</StatusCell>
        <StatusCell $w={40}>Snap Grid</StatusCell>
        <StatusCell $w={42}>Guildline:</StatusCell>
        <StatusCell $w={40}>Object:Off</StatusCell>
      </StatusBar>
      <TaskBar>
        <TaskItem $w={42} $bg="radial-gradient(circle at 20px 8px, #9cc4e0 8px, #2b3a8c 12px, #37307e 20px)" />
        <TaskItem $w={116} $bg="linear-gradient(90deg, #e3dcea, #b9aed2 50%, #7d6fb0)" />
        <TaskItem $w={117} $bg="radial-gradient(circle at 19px 7px, #d8324a 5px, transparent 6px), linear-gradient(90deg, #f3eaf3, #d9c8e2 60%, #a596c8)" />
        <TaskItem $w={116} $bg="radial-gradient(circle at 19px 7px, #3a3632 5px, transparent 6px), linear-gradient(90deg, #cfc6e0, #8d82bb 50%, #5a4fa0)" />
      </TaskBar>
    </Window>
  );
}
